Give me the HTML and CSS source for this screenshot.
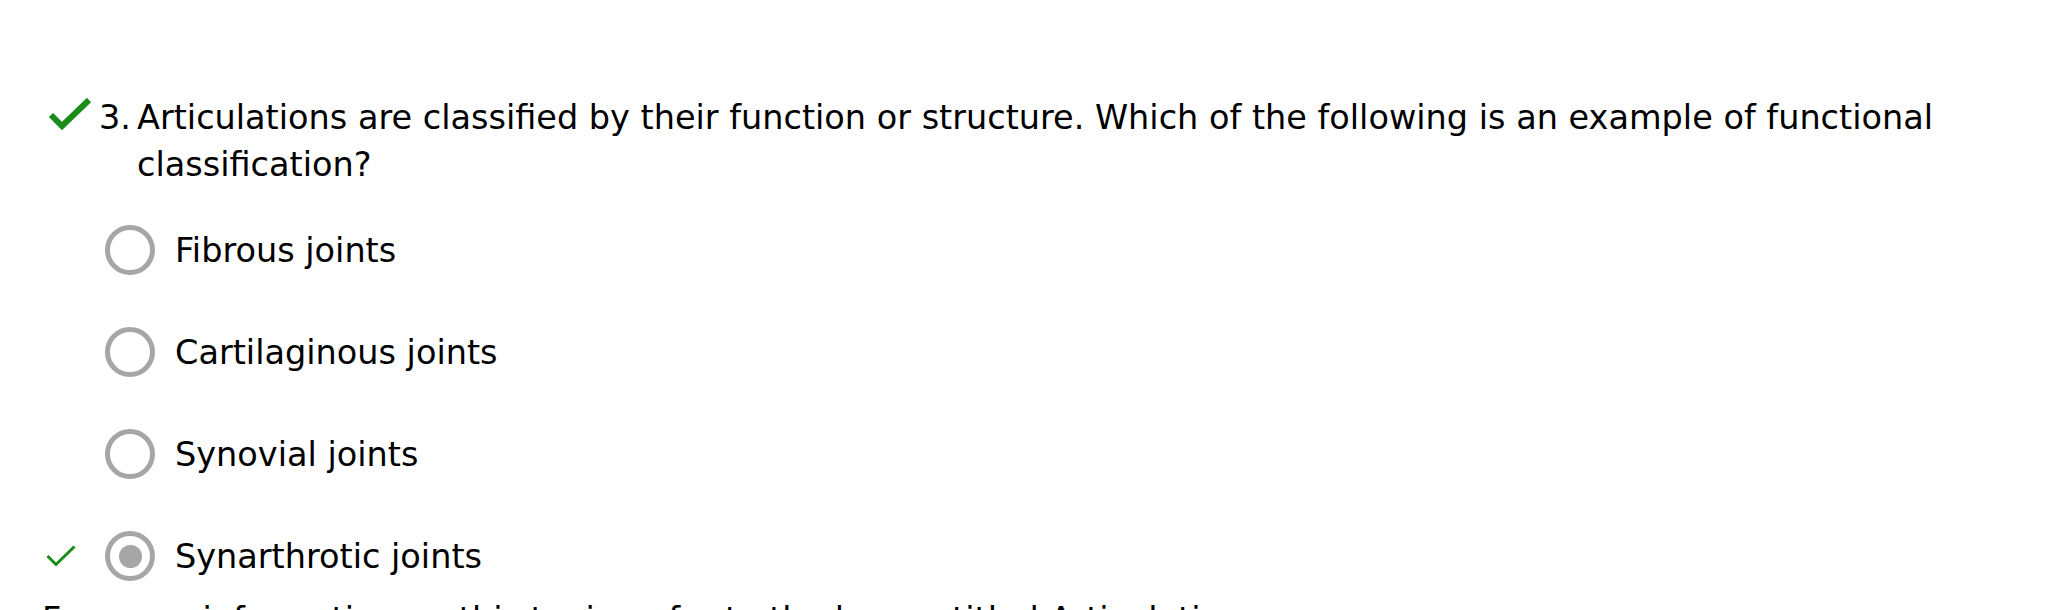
FILE: index.html
```html
<!DOCTYPE html>
<html lang="en">
<head>
<meta charset="utf-8">
<title>Quiz question 3</title>
<link rel="stylesheet" href="styles.css">
</head>
<body>
<div class="page">
  <div class="question">
    <span class="qmark">
      <svg width="44" height="34" viewBox="0 0 44 34"><path d="M3 18 L14 29 L41 3" fill="none" stroke="#1a8c1a" stroke-width="6"/></svg>
    </span>
    <span class="qnum">3.</span>
    <span class="qtext">Articulations are classified by their function or structure. Which of the following is an example of functional classification?</span>
  </div>
  <ul class="options">
    <li class="option"><span class="mark"></span><span class="radio"></span><span class="label">Fibrous joints</span></li>
    <li class="option"><span class="mark"></span><span class="radio"></span><span class="label">Cartilaginous joints</span></li>
    <li class="option"><span class="mark"></span><span class="radio"></span><span class="label">Synovial joints</span></li>
    <li class="option"><span class="mark"><svg width="30" height="22" viewBox="0 0 30 22"><path d="M1.5 11 L10 19.5 L28.5 1.5" fill="none" stroke="#1a8c1a" stroke-width="3"/></svg></span><span class="radio checked"></span><span class="label">Synarthrotic joints</span></li>
  </ul>
  <p class="feedback">For more information on this topic, refer to the lesson titled Articulations.</p>
</div>
</body>
</html>
```
FILE: styles.css
```css
html, body {
  margin: 0;
  padding: 0;
  background: #ffffff;
}
.page {
  font-family: "DejaVu Sans", Verdana, sans-serif;
  font-size: 33.5px;
  line-height: 47px;
  color: #000000;
}
.question {
  display: flex;
  align-items: flex-start;
  padding-top: 94px;
  padding-right: 60px;
}
.qmark {
  display: flex;
  flex: 0 0 auto;
  width: 44px;
  margin-left: 48px;
  margin-right: 7px;
  padding-top: 3px;
}
.qnum {
  flex: 0 0 auto;
  width: 38px;
}
.qtext {
  flex: 1 1 auto;
}
.options {
  list-style: none;
  margin: 22px 0 0 0;
  padding: 0 0 0 46px;
  display: flex;
  flex-direction: column;
  gap: 22px;
}
.option {
  display: flex;
  align-items: center;
  height: 80px;
}
.mark {
  display: flex;
  align-items: center;
  width: 30px;
  margin-right: 29px;
}
.radio {
  box-sizing: border-box;
  width: 50px;
  height: 50px;
  border: 5px solid #a6a6a6;
  border-radius: 50%;
  display: flex;
  align-items: center;
  justify-content: center;
  margin-right: 20px;
}
.radio.checked::after {
  content: "";
  width: 23px;
  height: 23px;
  border-radius: 50%;
  background: #a6a6a6;
}
.feedback {
  margin: 0;
  padding-left: 42px;
}
```
